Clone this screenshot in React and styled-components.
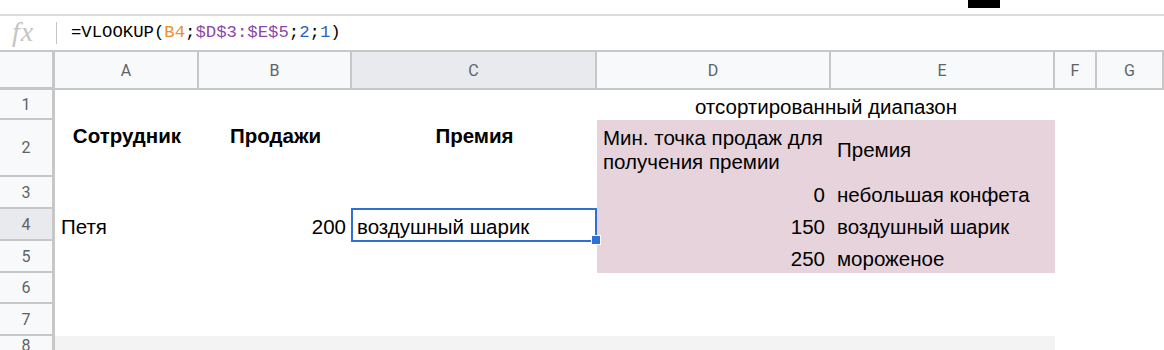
import React from "react";
import styled, { createGlobalStyle, css } from "styled-components";

const GlobalStyle = createGlobalStyle`
    body {
        margin: 0;
        background: #fff;
        font-family: "Liberation Sans", Arial, sans-serif;
    }
`;

const cols = ["A", "B", "C", "D", "E", "F", "G"];
const colTemplate = "55px 144px 153px 245px 234px 224px 42px 1fr";
const rowHeights = [30, 57, 32, 32, 32, 31, 32, 20];

const TopBar = styled.div`
    height: 14px;
    border-bottom: 2px solid #dadce0;
    display: flex;
    justify-content: flex-end;
    padding-right: 164px;
`;

const BlackChip = styled.div`
    width: 32px;
    height: 8px;
    background: #000;
`;

const FormulaBar = styled.div`
    height: 34px;
    display: flex;
    align-items: center;
    border-bottom: 2px solid #c7c7c7;
`;

const FxIcon = styled.div`
    width: 46px;
    text-align: center;
    font-family: "Liberation Serif", "Times New Roman", serif;
    font-style: italic;
    font-size: 28px;
    color: #c4c4c4;
    letter-spacing: 1px;
    margin-top: -2px;
`;

const Divider = styled.div`
    width: 1px;
    height: 22px;
    background: #c4c4c4;
    margin: 0 14px 0 10px;
`;

const Formula = styled.div`
    font-family: "Liberation Mono", "DejaVu Sans Mono", monospace;
    font-size: 17.3px;
    color: #000;
    margin-top: -2px;
`;

const Token = styled.span`
    color: ${p => p.$c || "#000"};
`;

const Sheet = styled.div`
    display: grid;
    grid-template-columns: ${colTemplate};
    grid-template-rows: 38px ${rowHeights.map(h => h + "px").join(" ")};
`;

const Corner = styled.div`
    background: #f8f9fa;
    border-right: 3px solid #c7c7c7;
    border-bottom: 3px solid #c7c7c7;
`;

const ColHead = styled.div`
    background: ${p => (p.$active ? "#e8eaed" : "#f8f9fa")};
    border-right: 2px solid #c7c7c7;
    border-bottom: 2px solid #c7c7c7;
    display: flex;
    align-items: center;
    justify-content: center;
    font-family: Roboto, "Liberation Sans", sans-serif;
    font-size: 16px;
    color: #5f6368;
`;

const RowHead = styled.div`
    background: ${p => (p.$active ? "#e8eaed" : "#f8f9fa")};
    border-right: 3px solid #c7c7c7;
    border-bottom: 2px solid #c7c7c7;
    display: flex;
    align-items: center;
    justify-content: center;
    font-family: Roboto, "Liberation Sans", sans-serif;
    font-size: 16px;
    color: #5f6368;
`;

const Cell = styled.div`
    position: relative;
    display: flex;
    align-items: center;
    padding: 3px 6px 0;
    font-size: 20.5px;
    line-height: 24px;
    color: #000;
    white-space: nowrap;
    grid-column: ${p => p.$col} / span ${p => p.$span || 1};
    grid-row: ${p => p.$row};
    justify-content: ${p => (p.$align === "right" ? "flex-end" : p.$align === "center" ? "center" : "flex-start")};
    ${p => p.$bold && css`font-weight: bold;`}
    ${p => p.$top && css`align-items: flex-start; padding-top: 4px;`}
    ${p => p.$wrap && css`white-space: normal; padding-top: 3px;`}
    ${p => p.$fill && css`background: ${p.$fill};`}
    ${p => p.$selected && css`
        z-index: 2;
        border: 2px solid #2f6fd6;
        padding-left: 4px;
        margin: -1px 0 -1px -1px;
    `}
`;

const Handle = styled.div`
    position: absolute;
    right: -6px;
    bottom: -5px;
    width: 8px;
    height: 8px;
    background: #2f6fd6;
    border: 1px solid #fff;
`;

const PINK = "#e6d3db";
const GREY = "#f3f3f3";

// col index: A=2 ... G=8 in grid
const cells = [
    { row: 1, col: 5, span: 2, align: "center", text: "отсортированный диапазон" },
    { row: 2, col: 2, align: "center", bold: true, top: true, text: "Сотрудник" },
    { row: 2, col: 3, align: "center", bold: true, top: true, text: "Продажи" },
    { row: 2, col: 4, align: "center", bold: true, top: true, text: "Премия" },
    { row: 2, col: 5, wrap: true, fill: PINK, text: "Мин. точка продаж для получения премии" },
    { row: 2, col: 6, fill: PINK, text: "Премия" },
    { row: 3, col: 5, align: "right", fill: PINK, text: "0" },
    { row: 3, col: 6, fill: PINK, text: "небольшая конфета" },
    { row: 4, col: 2, text: "Петя" },
    { row: 4, col: 3, align: "right", text: "200" },
    { row: 4, col: 4, selected: true, text: "воздушный шарик" },
    { row: 4, col: 5, align: "right", fill: PINK, text: "150" },
    { row: 4, col: 6, fill: PINK, text: "воздушный шарик" },
    { row: 5, col: 5, align: "right", fill: PINK, text: "250" },
    { row: 5, col: 6, fill: PINK, text: "мороженое" },
    { row: 8, col: 2, span: 5, fill: GREY, text: "" },
];

export default function App() {
    return (
        <>
            <GlobalStyle />
            <TopBar>
                <BlackChip />
            </TopBar>
            <FormulaBar>
                <FxIcon>fx</FxIcon>
                <Divider />
                <Formula>
                    =VLOOKUP(<Token $c="#e8912d">B4</Token>;<Token $c="#8b46a8">$D$3:$E$5</Token>;
                    <Token $c="#2a62c4">2</Token>;<Token $c="#2a62c4">1</Token>)
                </Formula>
            </FormulaBar>
            <Sheet>
                <Corner />
                {cols.map(c => (
                    <ColHead key={c} $active={c === "C"}>{c}</ColHead>
                ))}
                {rowHeights.map((h, i) => (
                    <RowHead key={i} $active={i === 3} style={{ gridRow: i + 2 }}>{i + 1}</RowHead>
                ))}
                {cells.map((c, i) => (
                    <Cell
                        key={i}
                        $row={c.row + 1}
                        $col={c.col}
                        $span={c.span}
                        $align={c.align}
                        $bold={c.bold}
                        $top={c.top}
                        $wrap={c.wrap}
                        $fill={c.fill}
                        $selected={c.selected}
                    >
                        {c.text}
                        {c.selected && <Handle />}
                    </Cell>
                ))}
            </Sheet>
        </>
    );
}
